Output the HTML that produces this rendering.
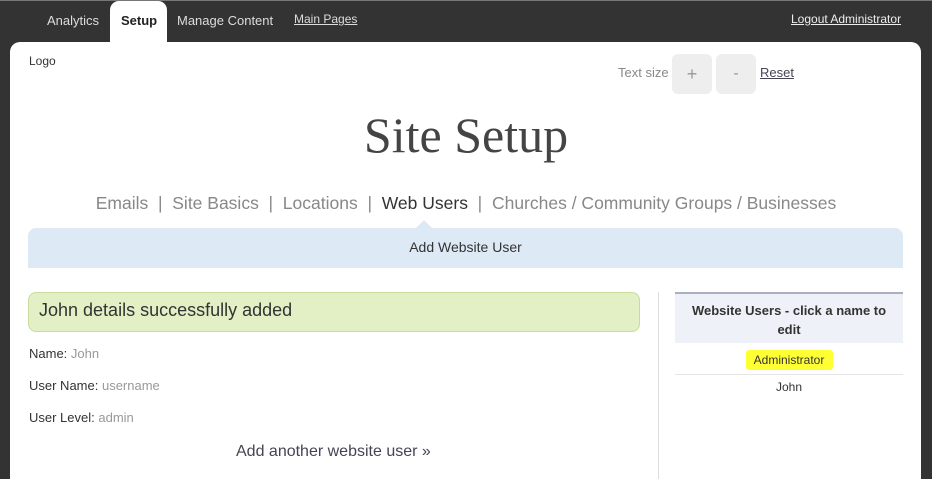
<!DOCTYPE html>
<html><head><style>
html,body{margin:0;width:932px;height:479px;overflow:hidden}
body{background:#333;font-family:"Liberation Sans",sans-serif;position:relative}
.a{position:absolute}
.top{color:#ddd;font-size:13px;top:13px}
</style></head><body>
<div class="a" style="left:0;top:0;width:932px;height:1px;background:#777"></div>
<div class="a top" style="left:47px">Analytics</div>
<div class="a" style="left:110px;top:1px;width:57px;height:45px;background:#fff;border-radius:9px 9px 0 0"></div>
<div class="a top" style="left:121px;color:#222;font-weight:bold">Setup</div>
<div class="a top" style="left:177px">Manage Content</div>
<div class="a top" style="left:294px;font-size:12px;text-decoration:underline;top:12px">Main Pages</div>
<div class="a top" style="left:791px;font-size:12px;text-decoration:underline;top:12px;color:#eee">Logout Administrator</div>
<div class="a" style="left:10px;top:42px;width:911px;height:437px;background:#fff;border-radius:10px 10px 0 0"></div>
<div class="a" style="left:29px;top:54px;font-size:12px;color:#333">Logo</div>
<div class="a" style="left:618px;top:65px;font-size:13px;color:#888">Text size</div>
<div class="a" style="left:672px;top:54px;width:40px;height:40px;background:#eee;border-radius:6px;color:#999;font-size:18px;text-align:center;line-height:40px">+</div>
<div class="a" style="left:716px;top:54px;width:40px;height:40px;background:#eee;border-radius:6px;color:#999;font-size:16px;text-align:center;line-height:40px">-</div>
<div class="a" style="left:760px;top:65px;font-size:13px;color:#445;text-decoration:underline">Reset</div>
<div class="a" style="left:0;width:932px;top:106px;text-align:center;font-family:'Liberation Serif',serif;font-size:50px;color:#444">Site Setup</div>
<div class="a" style="left:0;width:932px;top:193px;text-align:center;font-size:17.5px;color:#888">Emails &nbsp;| &nbsp;Site Basics &nbsp;| &nbsp;Locations &nbsp;| &nbsp;<span style="color:#333">Web Users</span> &nbsp;| &nbsp;Churches / Community Groups / Businesses</div>
<div class="a" style="left:28px;top:228px;width:875px;height:40px;background:#dde9f5;border-radius:8px 8px 0 0;text-align:center;line-height:38px;font-size:14px;color:#333">Add Website User</div>
<div class="a" style="left:416px;top:220px;width:0;height:0;border:8px solid transparent;border-bottom-color:#dde9f5;border-top:0"></div>
<div class="a" style="left:28px;top:292px;width:610px;height:38px;background:#e3efc4;border:1px solid #c9db9d;border-radius:8px;font-size:18px;color:#333;line-height:34px;text-indent:10px">John details successfully added</div>
<div class="a" style="left:29px;top:346px;font-size:13px;color:#333">Name: <span style="color:#999">John</span></div>
<div class="a" style="left:29px;top:378px;font-size:13px;color:#333">User Name: <span style="color:#999">username</span></div>
<div class="a" style="left:29px;top:410px;font-size:13px;color:#333">User Level: <span style="color:#999">admin</span></div>
<div class="a" style="left:236px;top:443px;font-size:16px;color:#445">Add another website user »</div>
<div class="a" style="left:658px;top:292px;width:1px;height:187px;background:#ddd"></div>
<div class="a" style="left:675px;top:292px;width:228px;border-top:2px solid #aab0c0;background:#eef2f8;text-align:center;font-size:13px;font-weight:bold;color:#333;line-height:19px;padding:7px 8px 0;box-sizing:border-box;height:51px">Website Users - click a name to<br>edit</div>
<div class="a" style="left:746px;top:350px;width:87px;height:20px;background:#ffff33;border-radius:3px"></div>
<div class="a" style="left:675px;top:353px;width:228px;text-align:center;font-size:12px;color:#333">Administrator</div>
<div class="a" style="left:675px;top:374px;width:228px;height:1px;background:#e5e5e5"></div>
<div class="a" style="left:675px;top:380px;width:228px;text-align:center;font-size:12px;color:#333">John</div>
</body></html>
